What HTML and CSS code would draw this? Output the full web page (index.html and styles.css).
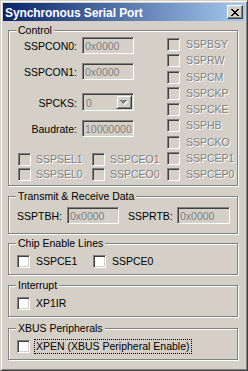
FILE: index.html
```html
<!DOCTYPE html>
<html lang="en">
<head>
    <meta charset="UTF-8">
    <meta name="viewport" content="width=device-width, initial-scale=1.0">
    <title>Synchronous Serial Port</title>
    <link rel="stylesheet" href="styles.css">
</head>
<body>
    <div class="window">
        <div class="titlebar">
            <span class="title">Synchronous Serial Port</span>
            <span class="close" aria-label="Close">
                <svg width="8" height="7" viewBox="0 0 8 7" shape-rendering="crispEdges">
                    <path d="M0 0h2v1H0zM6 0h2v1H6zM1 1h2v1H1zM5 1h2v1H5zM2 2h4v1H2zM3 3h2v1H3zM2 4h4v1H2zM1 5h2v1H1zM5 5h2v1H5zM0 6h2v1H0zM6 6h2v1H6z" fill="#000"/>
                </svg>
            </span>
        </div>

        <div class="client">
            <!-- Control -->
            <fieldset class="group">
                <legend>Control</legend>
                <div class="control-cols">
                    <div class="control-left">
                        <div class="frow">
                            <label>SSPCON0:</label>
                            <span class="edit">0x0000</span>
                        </div>
                        <div class="frow">
                            <label>SSPCON1:</label>
                            <span class="edit">0x0000</span>
                        </div>
                        <div class="frow combo-row">
                            <label>SPCKS:</label>
                            <span class="combo">
                                <span class="combo-text">0</span>
                                <span class="combo-btn">
                                    <svg width="8" height="5" viewBox="0 0 8 5" shape-rendering="crispEdges">
                                        <path d="M1 1h7v1H1zM2 2h5v1H2zM3 3h3v1H3zM4 4h1v1H4z" fill="#fff"/>
                                        <path d="M0 0h7v1H0zM1 1h5v1H1zM2 2h3v1H2zM3 3h1v1H3z" fill="#808080"/>
                                    </svg>
                                </span>
                            </span>
                        </div>
                        <div class="frow">
                            <label>Baudrate:</label>
                            <span class="edit">10000000</span>
                        </div>
                        <div class="check-grid">
                            <div class="check disabled"><span class="box"></span><span class="lbl">SSPSEL1</span></div>
                            <div class="check disabled"><span class="box"></span><span class="lbl">SSPCEO1</span></div>
                            <div class="check disabled"><span class="box"></span><span class="lbl">SSPSEL0</span></div>
                            <div class="check disabled"><span class="box"></span><span class="lbl">SSPCEO0</span></div>
                        </div>
                    </div>
                    <div class="control-right">
                        <div class="check disabled"><span class="box"></span><span class="lbl">SSPBSY</span></div>
                        <div class="check disabled"><span class="box"></span><span class="lbl">SSPRW</span></div>
                        <div class="check disabled"><span class="box"></span><span class="lbl">SSPCM</span></div>
                        <div class="check disabled"><span class="box"></span><span class="lbl">SSPCKP</span></div>
                        <div class="check disabled"><span class="box"></span><span class="lbl">SSPCKE</span></div>
                        <div class="check disabled"><span class="box"></span><span class="lbl">SSPHB</span></div>
                        <div class="check disabled"><span class="box"></span><span class="lbl">SSPCKO</span></div>
                        <div class="check disabled"><span class="box"></span><span class="lbl">SSPCEP1</span></div>
                        <div class="check disabled"><span class="box"></span><span class="lbl">SSPCEP0</span></div>
                    </div>
                </div>
            </fieldset>

            <!-- Transmit & Receive -->
            <fieldset class="group group-trx">
                <legend>Transmit &amp; Receive Data</legend>
                <div class="trow">
                    <label class="tlabel">SSPTBH:</label>
                    <span class="edit">0x0000</span>
                    <label class="tlabel tlabel-2">SSPRTB:</label>
                    <span class="edit edit-wide">0x0000</span>
                </div>
            </fieldset>

            <!-- Chip Enable Lines -->
            <fieldset class="group group-chip">
                <legend>Chip Enable Lines</legend>
                <div class="crow">
                    <div class="check col"><span class="box"></span><span class="lbl">SSPCE1</span></div>
                    <div class="check"><span class="box"></span><span class="lbl">SSPCE0</span></div>
                </div>
            </fieldset>

            <!-- Interrupt -->
            <fieldset class="group group-irq">
                <legend>Interrupt</legend>
                <div class="crow">
                    <div class="check"><span class="box"></span><span class="lbl">XP1IR</span></div>
                </div>
            </fieldset>

            <!-- XBUS -->
            <fieldset class="group group-xbus">
                <legend>XBUS Peripherals</legend>
                <div class="crow">
                    <div class="check"><span class="box"></span><span class="lbl focus">XPEN (XBUS Peripheral Enable)</span></div>
                </div>
            </fieldset>
        </div>
    </div>
</body>
</html>
```

FILE: styles.css
```css
body {
    margin: 0;
    background: #d4d0c8;
    font-family: "Liberation Sans", Arial, sans-serif;
    font-size: 10.5px;
    color: #000;
}
.window {
    width: 248px;
    height: 371px;
    box-sizing: border-box;
    border: 1px solid;
    border-color: #d4d0c8 #404040 #404040 #d4d0c8;
    box-shadow: inset 1px 1px 0 #fff, inset -1px -1px 0 #808080;
    padding: 2px;
    background: #d4d0c8;
}
.titlebar {
    height: 18px;
    display: flex;
    align-items: center;
    justify-content: space-between;
    padding: 0 2px;
    background: linear-gradient(to right, #0a246a, #a6caf0);
}
.title {
    color: #fff;
    font-weight: bold;
    font-size: 12px;
    letter-spacing: -0.1px;
    line-height: 18px;
    padding-top: 1px;
}
.close {
    width: 16px;
    height: 14px;
    box-sizing: border-box;
    border: 1px solid;
    border-color: #fff #404040 #404040 #fff;
    box-shadow: inset -1px -1px 0 #808080;
    background: #d4d0c8;
    display: flex;
    align-items: center;
    justify-content: center;
}
.close svg {
    display: block;
    margin-left: -1px;
}
.client {
    padding: 3px 0 0 5px;
}

/* group boxes */
.group {
    margin: 0;
    padding: 0;
    width: 230px;
    min-inline-size: 0;
    box-sizing: border-box;
    border: 1px solid #808080;
    box-shadow: inset 1px 1px 0 #fff, 1px 1px 0 #fff;
}
.group legend {
    margin-left: 7px;
    padding: 0 2px;
    height: 13px;
    line-height: 13px;
    background: #d4d0c8;
}
.group-trx {
    margin-top: 4px;
}
.group-chip {
    margin-top: 3px;
}
.group-irq {
    margin-top: 4px;
}
.group-xbus {
    margin-top: 5px;
}

/* control group */
.control-cols {
    display: flex;
    padding-bottom: 4px;
}
.control-left {
    width: 158px;
}
.frow {
    display: flex;
    align-items: baseline;
    height: 17px;
    margin-top: 9px;
}
.frow:first-child {
    margin-top: 0;
}
.frow label {
    width: 68px;
    margin-right: 5px;
    text-align: right;
    line-height: 13px;
}
.frow.combo-row {
    height: 18px;
    margin-top: 13px;
}
.edit {
    width: 52px;
    height: 17px;
    box-sizing: border-box;
    border: 1px solid;
    border-color: #808080 #fff #fff #808080;
    box-shadow: inset 1px 1px 0 #404040, inset -1px -1px 0 #d4d0c8;
    padding: 1px 0 0 2px;
    line-height: 14px;
    color: #808080;
    overflow: hidden;
    white-space: nowrap;
}
.edit-wide {
    width: 53px;
}
.combo {
    width: 52px;
    height: 18px;
    box-sizing: border-box;
    border: 1px solid;
    border-color: #808080 #fff #fff #808080;
    box-shadow: inset 1px 1px 0 #404040, inset -1px -1px 0 #d4d0c8;
    padding: 1px;
    display: flex;
}
.combo-text {
    flex: 1;
    padding: 1px 0 0 2px;
    line-height: 14px;
    color: #808080;
}
.combo-btn {
    width: 16px;
    height: 14px;
    box-sizing: border-box;
    border: 1px solid;
    border-color: #d4d0c8 #404040 #404040 #d4d0c8;
    box-shadow: inset 1px 1px 0 #fff, inset -1px -1px 0 #808080;
    display: flex;
    align-items: center;
    justify-content: center;
}
.combo-btn svg {
    display: block;
}
.check-grid {
    display: grid;
    grid-template-columns: 74px 74px;
    row-gap: 2px;
    margin-top: 16px;
    padding-left: 9px;
}
.control-right {
    padding-top: 1px;
}
.control-right .check {
    height: 13px;
    margin-top: 3.25px;
}
.control-right .check:first-child {
    margin-top: 0;
}
.control-right .box {
    margin-right: 6px;
}

/* checkboxes */
.check {
    display: flex;
    align-items: center;
    height: 13px;
    line-height: 13px;
    white-space: nowrap;
}
.box {
    flex: none;
    width: 13px;
    height: 13px;
    box-sizing: border-box;
    border: 1px solid;
    border-color: #808080 #fff #fff #808080;
    box-shadow: inset 1px 1px 0 #404040, inset -1px -1px 0 #d4d0c8;
    background: #fff;
    margin-right: 5px;
}
.check.disabled .box {
    background: #d4d0c8;
}
.check.disabled .lbl {
    color: #808080;
    text-shadow: 1px 1px 0 #fff;
}

/* transmit row */
.trow {
    display: flex;
    align-items: baseline;
    padding: 4px 0 9px 8px;
}
.tlabel {
    width: 50px;
    line-height: 13px;
}
.tlabel-2 {
    margin-left: 9px;
    width: 49px;
}

/* single-line check groups */
.crow {
    display: flex;
    padding: 5px 0 6px 8px;
}
.crow .box {
    margin-right: 6px;
}
.crow .check.col {
    width: 76px;
}
.crow .focus {
    margin-left: -1px;
    padding-left: 1px;
    padding-right: 1px;
    outline: 1px dotted #000;
}
```
